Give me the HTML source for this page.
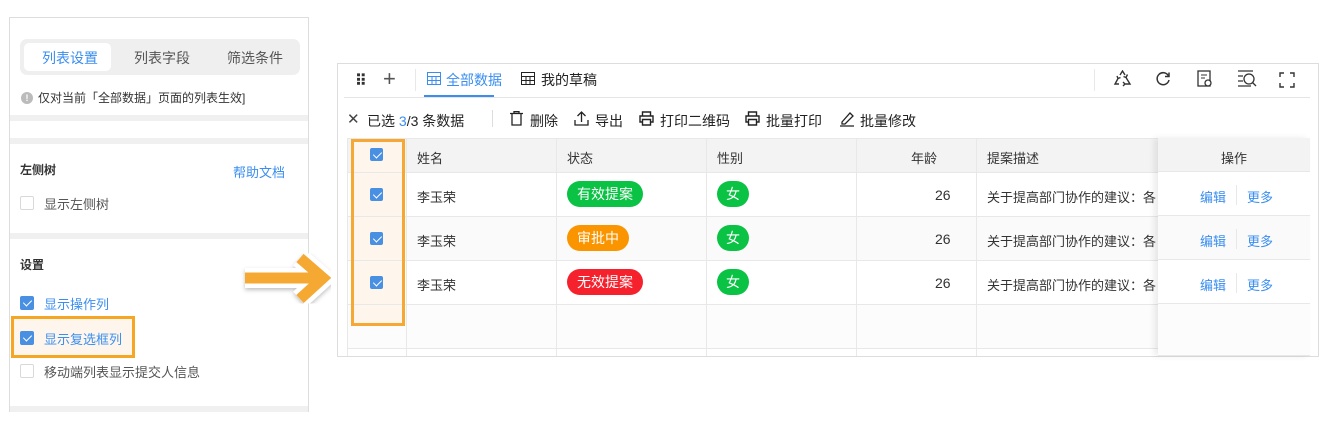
<!DOCTYPE html>
<html><head><meta charset="utf-8"><style>
*{box-sizing:border-box;margin:0;padding:0}
body{width:1337px;height:429px;background:#fff;position:relative;overflow:hidden;font-family:"Liberation Sans","Noto Sans CJK SC",sans-serif;font-size:13px;color:#333}
.a{position:absolute;white-space:nowrap}
.band{position:absolute;left:10px;width:298px;height:6px;background:#f0f0f0}
.cb{position:absolute;width:14px;height:14px;border:1px solid #d9d9d9;border-radius:2px;background:#fff}
.cb.on{background:#4a90e2;border-color:#4a90e2}
.cb.on:after{content:"";position:absolute;left:4px;top:1px;width:4px;height:7px;border:solid #fff;border-width:0 1.5px 1.5px 0;transform:rotate(45deg)}
.blue{color:#3a8ef0}
.vl{position:absolute;width:1px;background:#e8e8e8}
.hl{position:absolute;height:1px;background:#e8e8e8}
.tag{position:absolute;height:26px;line-height:26px;border-radius:13px;color:#fff;font-size:14px;padding:0 10px}
</style></head><body>
<!-- left panel -->
<div class="a" style="left:9px;top:17px;width:300px;height:395px;border:1px solid #ddd"></div>
<div class="a" style="left:20px;top:39px;width:280px;height:36px;background:#efefef;border-radius:7px"></div>
<div class="a" style="left:24px;top:43px;width:87px;height:28px;background:#fff;border-radius:5px"></div>
<div class="a blue" style="left:42px;top:48px;font-size:14px">列表设置</div>
<div class="a" style="left:134px;top:48px;font-size:14px;color:#555">列表字段</div>
<div class="a" style="left:227px;top:48px;font-size:14px;color:#555">筛选条件</div>
<div class="a" style="left:21px;top:92px;width:12px;height:12px;border-radius:50%;background:#bbb;color:#fff;font-size:9px;text-align:center;line-height:12px;font-weight:bold">!</div>
<div class="a" style="left:38px;top:89px;font-size:12px">仅对当前「全部数据」页面的列表生效]</div>
<div class="band" style="top:115px"></div>
<div class="band" style="top:138px"></div>
<div class="a" style="left:20px;top:161px;font-size:12px;font-weight:bold">左侧树</div>
<div class="a blue" style="left:233px;top:162px">帮助文档</div>
<div class="cb" style="left:20px;top:196px"></div>
<div class="a" style="left:44px;top:194px;color:#555">显示左侧树</div>
<div class="band" style="top:233px"></div>
<div class="a" style="left:20px;top:256px;font-size:12px;font-weight:bold">设置</div>
<div class="cb on" style="left:20px;top:296px"></div>
<div class="a blue" style="left:44px;top:294px">显示操作列</div>
<div class="a" style="left:11px;top:316px;width:124px;height:42px;border:3px solid #f5a623;background:#fef6ec"></div>
<div class="cb on" style="left:20px;top:331px"></div>
<div class="a blue" style="left:44px;top:329px">显示复选框列</div>
<div class="cb" style="left:20px;top:364px"></div>
<div class="a" style="left:44px;top:362px;color:#555">移动端列表显示提交人信息</div>
<div class="band" style="top:406px"></div>
<!-- arrow -->
<svg class="a" style="left:235px;top:248px" width="100" height="66" viewBox="235 248 100 66">
<defs><filter id="s"><feDropShadow dx="0" dy="2" stdDeviation="2" flood-color="#000" flood-opacity=".25"/></filter></defs>
<g filter="url(#s)">
<path d="M245 278 H320 M300 258 L323 278 L300 299" fill="none" stroke="#fff" stroke-width="20" stroke-linejoin="miter"/>
<path d="M245 278 H320 M300 258 L323 278 L300 299" fill="none" stroke="#f5a833" stroke-width="11" stroke-linejoin="miter"/>
</g></svg>
<!-- right panel -->
<div class="a" style="left:337px;top:63px;width:982px;height:294px;border:1px solid #ddd"></div>
<div class="a" style="left:355px;top:71px;font-size:16px;font-weight:bold;letter-spacing:-1px">⠿</div>
<div class="a" style="left:383px;top:66px;font-size:22px;color:#555;font-weight:300">+</div>
<div class="vl" style="left:415px;top:69px;height:22px"></div>
<svg class="a" style="left:427px;top:72px" width="14" height="13"><rect x=".5" y=".5" width="13" height="12" fill="none" stroke="#3a8ef0"/><path d="M0 4.5H14M0 8.5H14M5 4V13M9 4V13" stroke="#3a8ef0"/></svg>
<div class="a blue" style="left:446px;top:70px;font-size:14px">全部数据</div>
<div class="a" style="left:424px;top:95px;width:70px;height:2px;background:#3a8ef0"></div>
<svg class="a" style="left:521px;top:72px" width="14" height="13"><rect x=".5" y=".5" width="13" height="12" fill="none" stroke="#222"/><path d="M0 4.5H14M0 8.5H14M5 4V13M9 4V13" stroke="#222"/></svg>
<div class="a" style="left:541px;top:70px;font-size:14px;color:#222">我的草稿</div>
<div class="hl" style="left:344px;top:97px;width:966px;background:#e5e5e5"></div>
<div class="vl" style="left:1094px;top:69px;height:22px"></div>
<svg class="a" style="left:1113px;top:70px" width="19" height="18" fill="none" stroke="#333" stroke-width="1.4"><path d="M7 5L9.5 1L12 5M13 7.5L17 14H12M6 14H2L5 8.5M10 12L12 14L10 16M4 6L5 8.5L7.5 7.5M14.5 4.5L13 7.5L10.5 6.5"/></svg>
<svg class="a" style="left:1155px;top:71px" width="16" height="16" fill="none" stroke="#333" stroke-width="1.5"><path d="M13.5 5A6 6 0 1 0 14 9"/><path d="M14 1.5V5.5H10" /></svg>
<svg class="a" style="left:1197px;top:70px" width="16" height="18"><rect x="1" y="1" width="12" height="15" fill="none" stroke="#333" stroke-width="1.3"/><path d="M4 5H10M4 8H8" stroke="#333"/><circle cx="11" cy="13" r="3" fill="#fff" stroke="#333" stroke-width="1.3"/></svg>
<svg class="a" style="left:1237px;top:70px" width="20" height="18"><path d="M1 1H16M1 6H6M1 11H6M1 16H14" stroke="#333" stroke-width="1.2"/><circle cx="12" cy="9" r="5" fill="none" stroke="#333" stroke-width="1.3"/><path d="M15.5 12.5L19 16" stroke="#333" stroke-width="1.3"/></svg>
<svg class="a" style="left:1279px;top:72px" width="16" height="16" fill="none" stroke="#333" stroke-width="1.4"><path d="M1 5V1H5M11 1H15V5M15 11V15H11M5 15H1V11"/></svg>
<!-- toolbar -->
<div class="a" style="left:347px;top:110px;font-size:15px;color:#444">✕</div>
<div class="a" style="left:367px;top:111px;font-size:14px;color:#222">已选 <span class="blue">3</span>/3 条数据</div>
<div class="vl" style="left:492px;top:110px;height:17px;background:#ddd"></div>
<svg class="a" style="left:510px;top:111px" width="13" height="15" fill="none" stroke="#222" stroke-width="1.3"><path d="M0 2.5H13M4 2.5V.7H9V2.5M2 2.5V14H11V2.5"/></svg>
<div class="a" style="left:530px;top:111px;font-size:14px;color:#222">删除</div>
<svg class="a" style="left:574px;top:111px" width="15" height="15" fill="none" stroke="#222" stroke-width="1.3"><path d="M7.5 11V1M3.5 5L7.5 1L11.5 5M1 9V14H14V9"/></svg>
<div class="a" style="left:595px;top:111px;font-size:14px;color:#222">导出</div>
<svg class="a" style="left:639px;top:111px" width="15" height="15" fill="none" stroke="#222" stroke-width="1.4"><path d="M3.5 5V1H11.5V5M3.5 11H1V5H14V11H11.5M3.5 8.5H11.5V14H3.5Z"/></svg>
<div class="a" style="left:660px;top:111px;font-size:14px;color:#222">打印二维码</div>
<svg class="a" style="left:745px;top:111px" width="15" height="15" fill="none" stroke="#222" stroke-width="1.4"><path d="M3.5 5V1H11.5V5M3.5 11H1V5H14V11H11.5M3.5 8.5H11.5V14H3.5Z"/></svg>
<div class="a" style="left:766px;top:111px;font-size:14px;color:#222">批量打印</div>
<svg class="a" style="left:839px;top:111px" width="16" height="16" fill="none" stroke="#222" stroke-width="1.3"><path d="M3 11L11 2L14 5L6 13H3ZM1 15H15"/></svg>
<div class="a" style="left:860px;top:111px;font-size:14px;color:#222">批量修改</div>
<!-- table -->
<div class="a" style="left:347px;top:138px;width:963px;height:34px;background:#f3f3f3"></div>
<div class="a" style="left:347px;top:216px;width:963px;height:44px;background:#fafafa"></div>
<div class="a" style="left:347px;top:304px;width:963px;height:44px;background:#fcfcfc"></div>
<div class="a" style="left:352px;top:140px;width:52px;height:185px;background:#fef6ec"></div>
<div class="hl" style="left:347px;top:138px;width:963px"></div>
<div class="hl" style="left:347px;top:172px;width:963px"></div>
<div class="hl" style="left:347px;top:216px;width:963px"></div>
<div class="hl" style="left:347px;top:260px;width:963px"></div>
<div class="hl" style="left:347px;top:304px;width:963px"></div>
<div class="hl" style="left:347px;top:348px;width:963px"></div>
<div class="vl" style="left:347px;top:138px;height:218px"></div>
<div class="vl" style="left:406px;top:138px;height:218px"></div>
<div class="vl" style="left:556px;top:138px;height:218px"></div>
<div class="vl" style="left:706px;top:138px;height:218px"></div>
<div class="vl" style="left:856px;top:138px;height:218px"></div>
<div class="vl" style="left:976px;top:138px;height:218px"></div>
<div class="a" style="left:1158px;top:138px;width:152px;height:218px;box-shadow:-4px 0 6px rgba(0,0,0,.08)"></div>
<div class="a" style="left:1158px;top:138px;width:152px;height:34px;background:#f3f3f3;border-bottom:1px solid #e8e8e8"></div>
<div class="a" style="left:1158px;top:172px;width:152px;height:44px;background:#fff;border-bottom:1px solid #e8e8e8"></div>
<div class="a" style="left:1158px;top:216px;width:152px;height:44px;background:#fafafa;border-bottom:1px solid #e8e8e8"></div>
<div class="a" style="left:1158px;top:260px;width:152px;height:44px;background:#fff;border-bottom:1px solid #e8e8e8"></div>
<div class="a" style="left:1158px;top:304px;width:152px;height:52px;background:#fcfcfc;border-bottom:1px solid #e8e8e8"></div>
<div class="a" style="left:351px;top:139px;width:54px;height:187px;border:3px solid #f5a833"></div>
<div class="cb on" style="left:370px;top:148px;width:13px;height:13px"></div>
<div class="cb on" style="left:370px;top:188px;width:13px;height:13px"></div>
<div class="cb on" style="left:370px;top:232px;width:13px;height:13px"></div>
<div class="cb on" style="left:370px;top:276px;width:13px;height:13px"></div>
<div class="a" style="left:417px;top:148px;color:#333">姓名</div>
<div class="a" style="left:567px;top:148px;color:#333">状态</div>
<div class="a" style="left:717px;top:148px;color:#333">性别</div>
<div class="a" style="left:911px;top:148px;color:#333">年龄</div>
<div class="a" style="left:987px;top:148px;color:#333">提案描述</div>
<div class="a" style="left:1221px;top:148px;color:#333">操作</div>
<div class="a" style="left:417px;top:187px">李玉荣</div>
<div class="a" style="left:417px;top:231px">李玉荣</div>
<div class="a" style="left:417px;top:275px">李玉荣</div>
<div class="tag" style="left:567px;top:181px;background:#0ac244">有效提案</div>
<div class="tag" style="left:567px;top:225px;background:#fa9500">审批中</div>
<div class="tag" style="left:567px;top:269px;background:#f5222d">无效提案</div>
<div class="tag" style="left:717px;top:181px;background:#0ac244;padding:0 9px">女</div>
<div class="tag" style="left:717px;top:225px;background:#0ac244;padding:0 9px">女</div>
<div class="tag" style="left:717px;top:269px;background:#0ac244;padding:0 9px">女</div>
<div class="a" style="left:935px;top:187px;font-size:14px">26</div>
<div class="a" style="left:935px;top:231px;font-size:14px">26</div>
<div class="a" style="left:935px;top:275px;font-size:14px">26</div>
<div class="a" style="left:987px;top:187px;width:171px;overflow:hidden;font-size:13px">关于提高部门协作的建议：各</div>
<div class="a" style="left:987px;top:231px;width:171px;overflow:hidden;font-size:13px">关于提高部门协作的建议：各</div>
<div class="a" style="left:987px;top:275px;width:171px;overflow:hidden;font-size:13px">关于提高部门协作的建议：各</div>
<div class="a blue" style="left:1200px;top:187px">编辑</div><div class="vl" style="left:1236px;top:185px;height:20px"></div><div class="a blue" style="left:1247px;top:187px">更多</div>
<div class="a blue" style="left:1200px;top:231px">编辑</div><div class="vl" style="left:1236px;top:229px;height:20px"></div><div class="a blue" style="left:1247px;top:231px">更多</div>
<div class="a blue" style="left:1200px;top:275px">编辑</div><div class="vl" style="left:1236px;top:273px;height:20px"></div><div class="a blue" style="left:1247px;top:275px">更多</div>
</body></html>
